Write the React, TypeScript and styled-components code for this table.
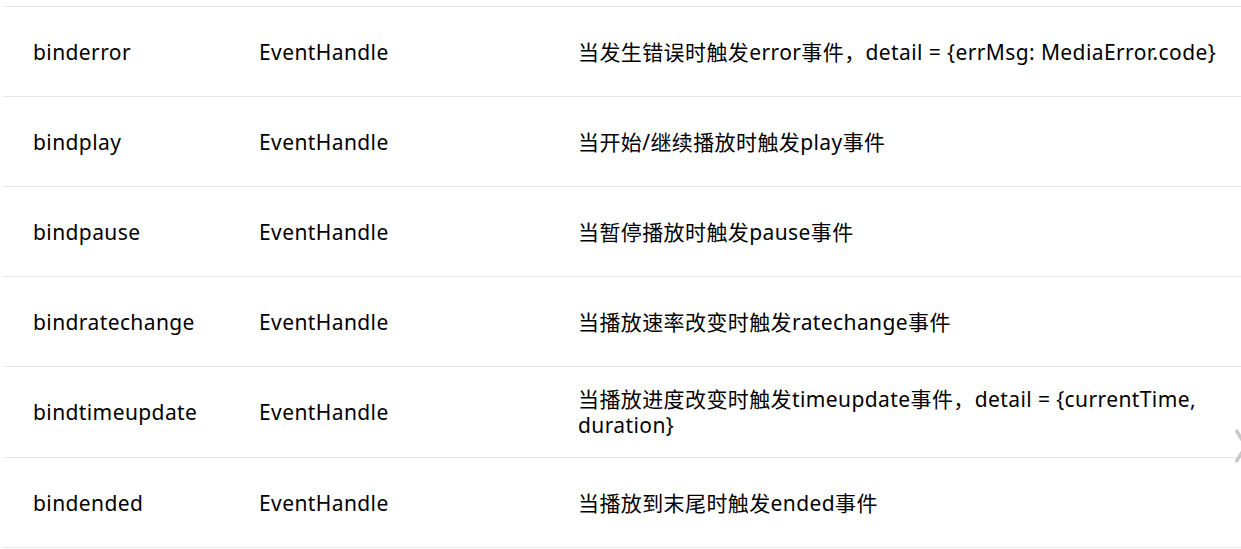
import React from "react";
import styled, { createGlobalStyle } from "styled-components";

const GlobalStyle = createGlobalStyle`
  html, body {
    margin: 0;
    padding: 0;
    background: #fff;
    overflow: hidden;
  }
  body {
    font-family: "Noto Sans", "Noto Sans CJK SC", sans-serif;
    color: #000;
  }
`;

const Page = styled.div`
  position: relative;
  width: 1241px;
  height: 549px;
  padding: 6px 0 0 3px;
  box-sizing: border-box;
`;

const Table = styled.div`
  width: 1238px;
  border-bottom: 1px solid #e6e6e6;
`;

const Row = styled.div`
  display: grid;
  grid-template-columns: 226px 319px 1fr;
  align-items: center;
  min-height: 90px;
  border-top: 1px solid #e6e6e6;
  box-sizing: border-box;
`;

const Cell = styled.div<{ $last?: boolean }>`
  padding: 19px ${(p) => (p.$last ? "10px" : "0")} 19px 30px;
  font-size: 21px;
  line-height: 26px;
  letter-spacing: 0.4px;
`;

const Arrow = styled.svg`
  position: absolute;
  right: -6px;
  top: 428px;
`;

const rows: [string, string, string][] = [
  ["binderror", "EventHandle", "当发生错误时触发error事件，detail = {errMsg: MediaError.code}"],
  ["bindplay", "EventHandle", "当开始/继续播放时触发play事件"],
  ["bindpause", "EventHandle", "当暂停播放时触发pause事件"],
  ["bindratechange", "EventHandle", "当播放速率改变时触发ratechange事件"],
  ["bindtimeupdate", "EventHandle", "当播放进度改变时触发timeupdate事件，detail = {currentTime, duration}"],
  ["bindended", "EventHandle", "当播放到末尾时触发ended事件"],
];

const App: React.FC = () => {
  return (
    <Page>
      <GlobalStyle />
      <Table>
        {rows.map(([name, type, desc]) => (
          <Row key={name}>
            <Cell>{name}</Cell>
            <Cell>{type}</Cell>
            <Cell $last>{desc}</Cell>
          </Row>
        ))}
      </Table>
      <Arrow width="12" height="36" viewBox="0 0 12 36">
        <path d="M1 2 L11 18 L1 34" fill="none" stroke="#c8c8c8" strokeWidth="3.5" />
      </Arrow>
    </Page>
  );
};

export default App;
